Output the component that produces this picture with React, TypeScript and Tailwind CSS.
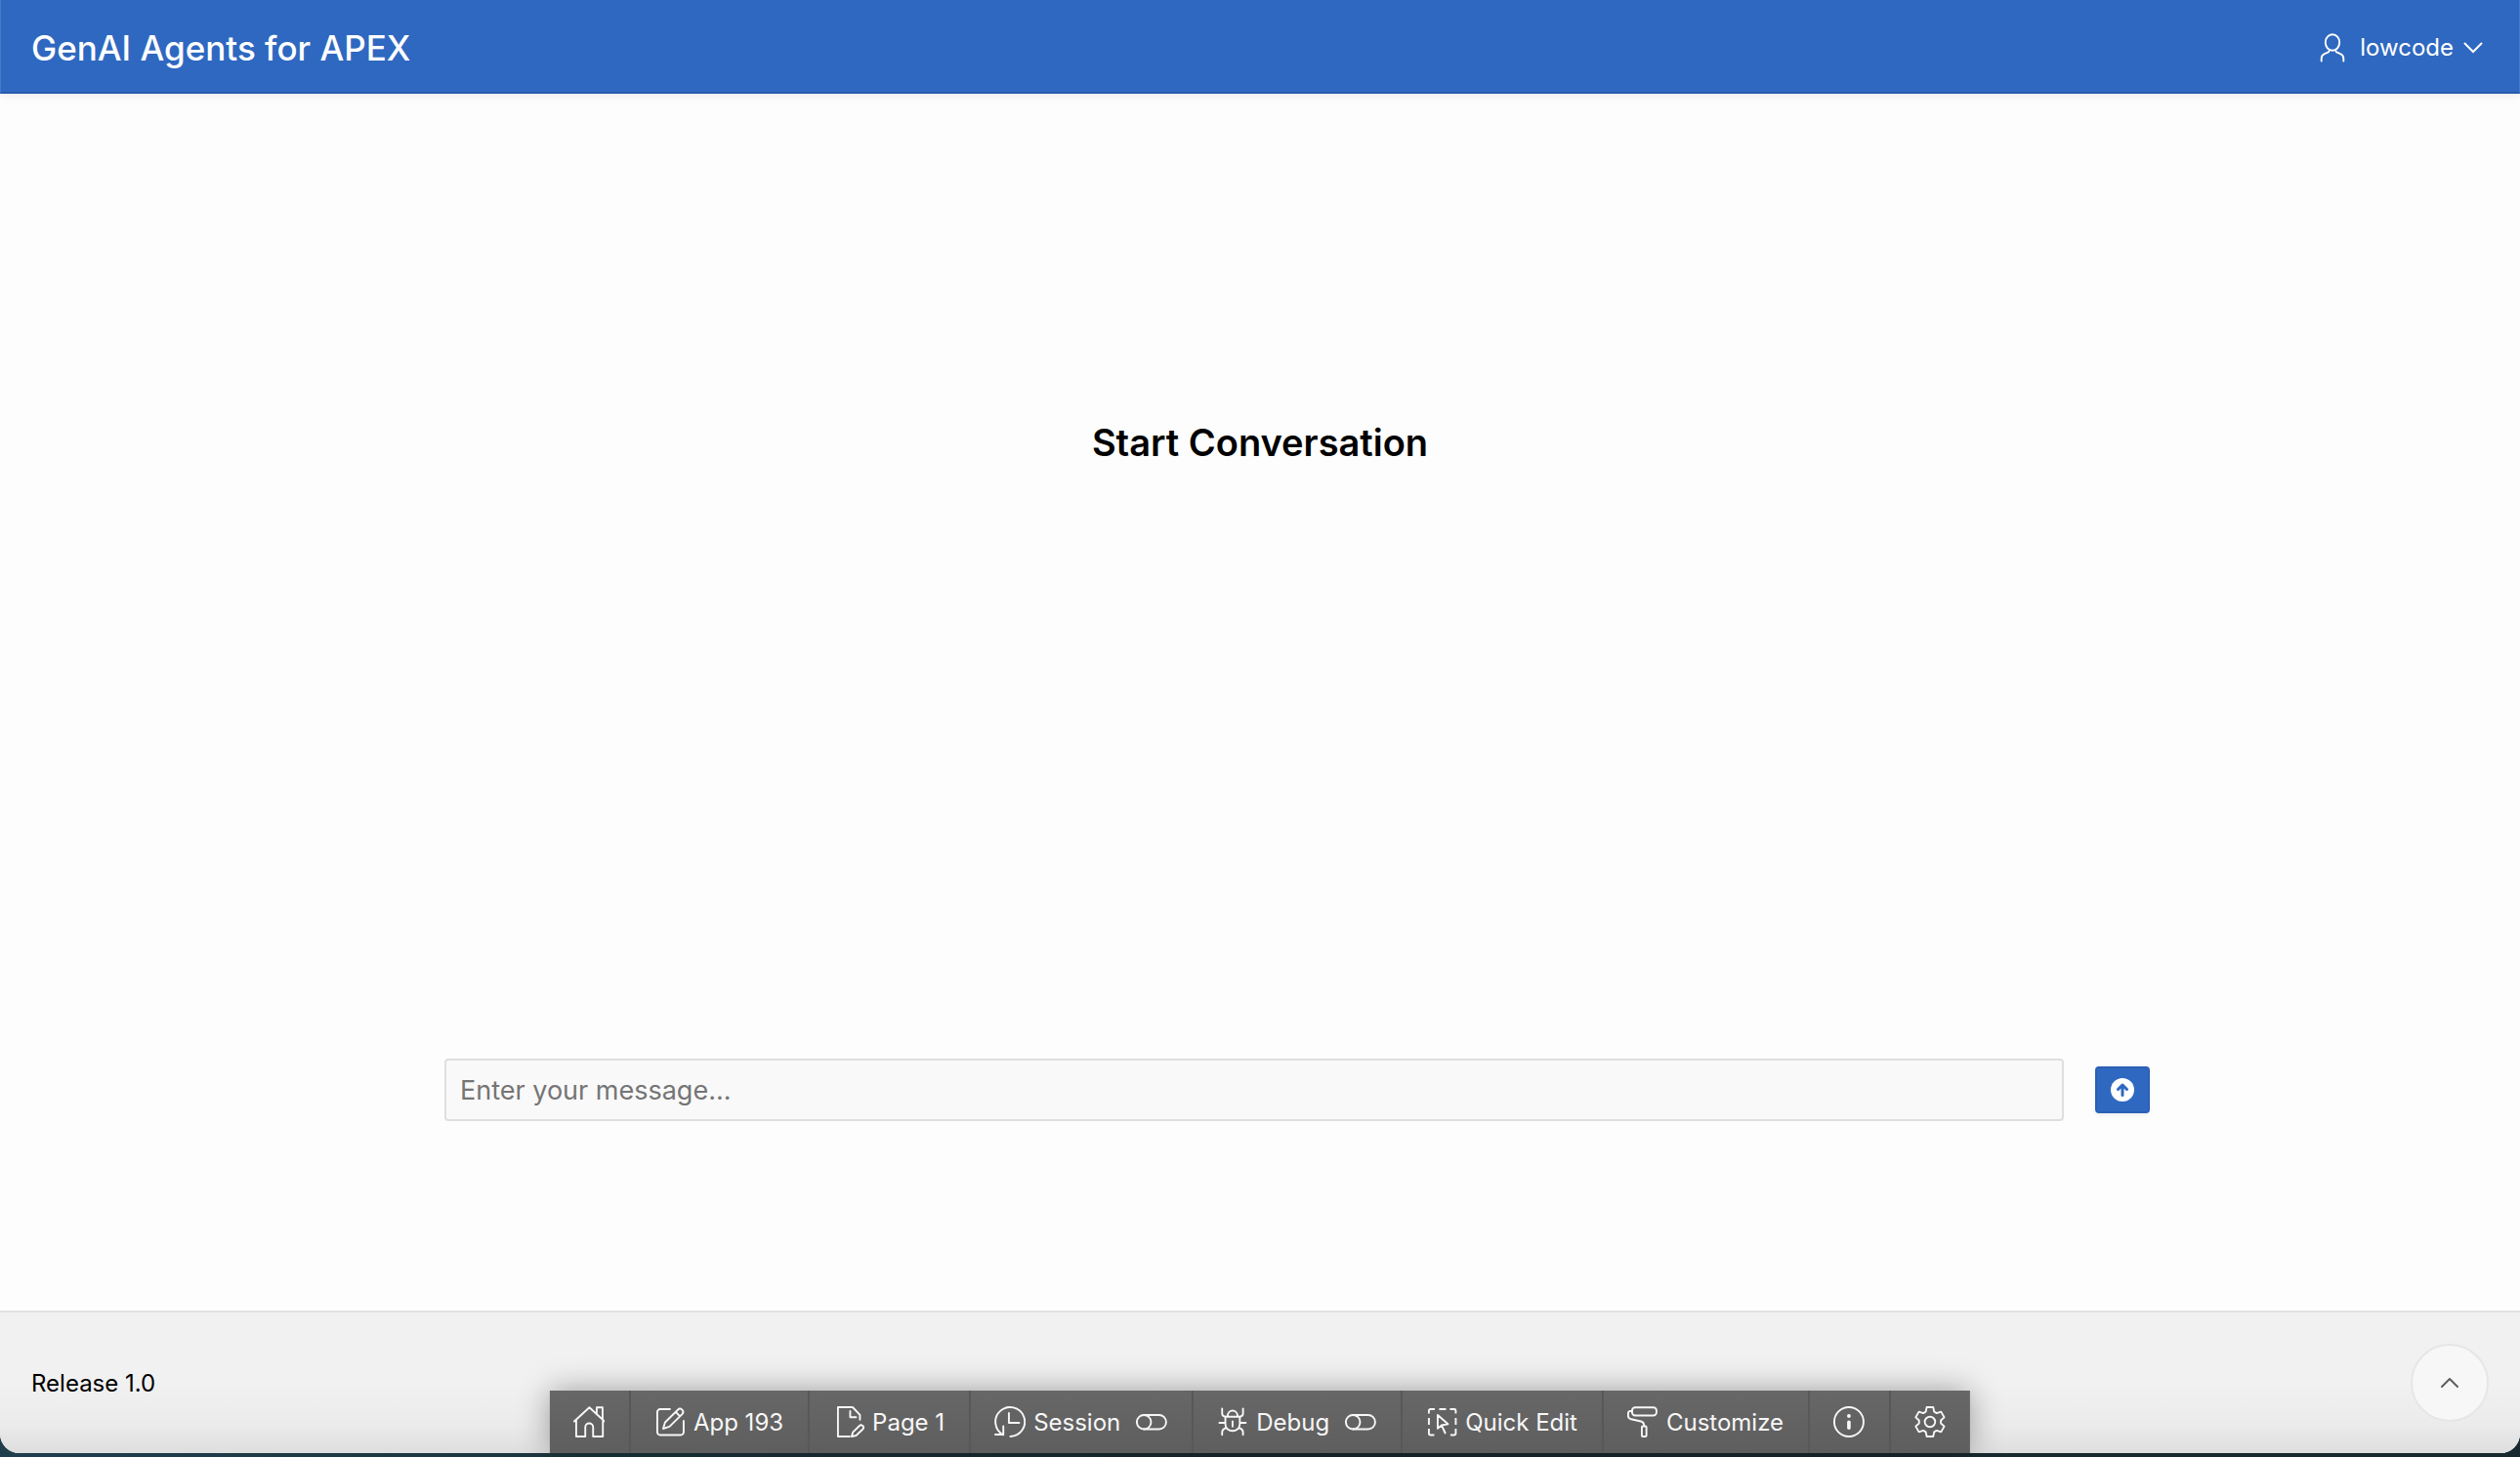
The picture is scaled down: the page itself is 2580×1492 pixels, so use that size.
import type { ReactNode } from "react";

function Icon({ children, className = "" }: { children: ReactNode; className?: string }) {
  return (
    <svg
      viewBox="0 0 32 32"
      className={`size-8 shrink-0 ${className}`}
      fill="none"
      stroke="currentColor"
      strokeWidth="1.9"
      strokeLinecap="round"
      strokeLinejoin="round"
      aria-hidden="true"
    >
      {children}
    </svg>
  );
}

const UserIcon = () => (
  <Icon>
    <ellipse cx="16" cy="10.5" rx="7.2" ry="8.2" />
    <path d="M4.700 29.500v-2.500c0-2.500 1.300-4 3.200-4.800l2.800-1.300c1.500-.6 2-1.500 2.200-2.600M27.300 29.500v-2.500c0-2.500-1.300-4-3.200-4.800l-2.800-1.300c-1.500-.6-2-1.500-2.200-2.600" />
  </Icon>
);

const HomeIcon = () => (
  <Icon>
    <path d="M1 15.500 16.500 1.300 32 15.500M3 14v17h9.300v-9.500a4 4 0 0 1 8 0V31h10V14M24 8V1.200h6v12" />
  </Icon>
);

const EditIcon = () => (
  <Icon>
    <path d="M16 3H6a3 3 0 0 0-3 3v20.500a3 3 0 0 0 3 3h21a3 3 0 0 0 3-3V15" />
    <path d="m9 23 2-6.500L24 3.700a3.100 3.100 0 0 1 4.500 4.400L15.500 20.900ZM22 6l4.300 4.300" />
  </Icon>
);

const PageIcon = () => (
  <Icon>
    <path d="M17 31H5V1h15l7.500 7.800v5M17.500 5v6.200h6" />
    <path d="m19 31 1.300-4.400 6.500-6.400a2.400 2.400 0 0 1 3.600 3.300L23.600 30Z" />
  </Icon>
);

const SessionIcon = () => (
  <Icon>
    <path d="M16.500 31A15 15 0 1 0 9.300 29.300M9.300 20.500V29H1M15 7v10h10.500" />
  </Icon>
);

const ToggleIcon = ({ className }: { className?: string }) => (
  <Icon className={className}>
    <rect x="1" y="9" width="30" height="14.500" rx="7.200" />
    <path d="M8.300 9a7.200 7.200 0 0 1 0 14.500" />
  </Icon>
);

const BugIcon = () => (
  <Icon>
    <path d="M10.800 10.700c0-8.200 10.400-8.200 10.400 0M5.300 2.500v4.800c0 2 1.500 3.400 3.700 3.400h14c2.200 0 3.700-1.400 3.700-3.400V2.500" />
    <path d="M8.600 10.700v7.500c0 9.300 14.800 9.300 14.800 0v-7.500M2.500 17h6M23.500 17h6M5.300 29.300v-2.500c0-2.500 1.700-4 4.500-4.600M26.700 29.300v-2.500c0-2.500-1.700-4-4.500-4.600M16 15.500v5.200" />
  </Icon>
);

const QuickEditIcon = () => (
  <Icon>
    <path d="M3 7.500V4.500A1.500 1.500 0 0 1 4.500 3H9M13.500 3h7M24.500 3H29a1.500 1.500 0 0 1 1.500 1.500v3M3 12v7M30.500 12v7M3 23v5a1.500 1.500 0 0 0 1.500 1.500H8.500M30.500 23v5a1.500 1.500 0 0 1-1.500 1.500h-4" strokeLinecap="butt" />
    <path d="M19.700 27.500 16 19.500 12 22.800V9l10.500 9.300-6.500 1.200" />
  </Icon>
);

const RollerIcon = () => (
  <Icon>
    <rect x="5" y="1.200" width="25" height="8.300" rx="3.200" />
    <path d="M5 5H3a2 2 0 0 0-2 2v3c0 2 1 2.800 3 3.300l10 2.200c2.200.5 3.300 1.500 3.300 4.500" />
    <rect x="15" y="20.500" width="4.700" height="10.500" rx="1" />
  </Icon>
);

const InfoIcon = () => (
  <Icon>
    <circle cx="16" cy="16" r="15" />
    <circle cx="16" cy="10" r="1.900" fill="currentColor" stroke="none" />
    <rect x="14.200" y="14.500" width="3.600" height="9.500" rx="1.800" fill="currentColor" stroke="none" />
  </Icon>
);

// One tooth as [x, y] offsets from the gear's centre; repeated every 60 degrees.
const tooth = [
  [-5.6, -9.6],
  [-4.3, -10.4],
  [-3.3, -15],
  [3.3, -15],
  [4.3, -10.4],
  [5.6, -9.6],
];
const gearPoints = [0, 60, 120, 180, 240, 300]
  .flatMap((deg) => {
    const a = (deg * Math.PI) / 180;
    return tooth.map(
      ([x, y]) =>
        `${(16 + x * Math.cos(a) - y * Math.sin(a)).toFixed(2)},${(16 + x * Math.sin(a) + y * Math.cos(a)).toFixed(2)}`,
    );
  })
  .join(" ");

const GearIcon = () => (
  <Icon>
    <polygon points={gearPoints} />
    <circle cx="16" cy="16" r="5.300" />
  </Icon>
);

const tools: { name: string; icon: ReactNode; label?: string; toggle?: boolean }[] = [
  { name: "Home", icon: <HomeIcon /> },
  { name: "App 193", icon: <EditIcon />, label: "App 193" },
  { name: "Page 1", icon: <PageIcon />, label: "Page 1" },
  { name: "Session", icon: <SessionIcon />, label: "Session", toggle: true },
  { name: "Debug", icon: <BugIcon />, label: "Debug", toggle: true },
  { name: "Quick Edit", icon: <QuickEditIcon />, label: "Quick Edit" },
  { name: "Customize", icon: <RollerIcon />, label: "Customize" },
  { name: "Info", icon: <InfoIcon /> },
  { name: "Settings", icon: <GearIcon /> },
];

function DeveloperToolbar() {
  return (
    <nav
      aria-label="Developer toolbar"
      className="absolute bottom-1 left-1/2 flex h-16 -translate-x-1/2 bg-linear-to-b from-[#676767] to-[#5e5e5e] text-[#f7f7f7] shadow-[0_0_32px_rgba(0,0,0,0.35)]"
    >
      {tools.map((tool) => (
        <button
          key={tool.name}
          type="button"
          aria-label={tool.name}
          className="flex items-center gap-2 border-r-2 border-[#585858] pr-[25px] pl-6 text-[24px] leading-8 whitespace-nowrap last:border-r-0"
        >
          {tool.icon}
          {tool.label && <span className="pt-0.5">{tool.label}</span>}
          {tool.toggle && <ToggleIcon className="ml-2" />}
        </button>
      ))}
    </nav>
  );
}

export default function App() {
  return (
    <div className="relative flex min-h-screen flex-col overflow-hidden bg-linear-to-r from-[#1f3f4c] via-[#182a30] to-[#182a30] pb-1 font-['Inter',sans-serif] text-black">
      <div className="flex flex-1 flex-col overflow-hidden rounded-b-[20px] bg-[#fdfdfd]">
        <header className="relative flex h-24 items-center justify-between border-x border-b-2 border-x-[#4478c8] border-b-[#295bab] bg-[#2f68c0] pt-1 pr-[37px] pl-[31px] text-white shadow-[0_2px_8px_rgba(0,0,0,0.08)]">
          <h1 className="text-[35px] leading-12 font-medium">GenAI Agents for APEX</h1>
          <button type="button" className="flex items-center text-[24px] leading-8">
            <UserIcon />
            <span className="ml-3">lowcode</span>
            <svg viewBox="0 0 20 12" className="ml-2.5 h-3 w-5" fill="none" stroke="currentColor" strokeWidth="2" strokeLinecap="round" aria-hidden="true">
              <path d="m1.500 1.500 8.500 8.500 8.500-8.500" />
            </svg>
          </button>
        </header>

        <main className="flex flex-1 flex-col justify-between pt-[333px] pb-[194px]">
          <h2 className="text-center text-[38px] leading-12 font-semibold">Start Conversation</h2>
          <form className="flex items-center gap-8 pr-[379px] pl-[455px]" onSubmit={(e) => e.preventDefault()}>
            <input
              type="text"
              aria-label="Message"
              placeholder="Enter your message..."
              className="h-16 min-w-0 flex-1 rounded-sm border-2 border-[#dfdfdf] bg-[#f9f9f9] px-3.5 text-[27px] outline-none placeholder:text-[#757575]"
            />
            <button
              type="submit"
              aria-label="Send"
              className="flex h-12 w-14 items-center justify-center rounded-sm border-2 border-[#2b60b4] bg-[#2f68c0] text-white shadow-[0_2px_4px_rgba(0,0,0,0.06)]"
            >
              <svg viewBox="0 0 24 24" className="size-6" aria-hidden="true">
                <circle cx="12" cy="12" r="12" fill="currentColor" />
                <path d="M12 17.500V7.500M7.500 11.500 12 7l4.500 4.500" fill="none" stroke="#2f68c0" strokeWidth="3" strokeLinecap="round" strokeLinejoin="round" />
              </svg>
            </button>
          </form>
        </main>

        <footer className="flex items-center justify-between border-t-2 border-[#e3e3e3] bg-linear-to-b from-[#f1f1f1] from-50% via-[#ebebeb] via-80% to-[#dedede] p-8">
          <span className="pt-0.5 text-[24px] leading-8">Release 1.0</span>
          <button
            type="button"
            aria-label="Back to top"
            className="flex size-20 items-center justify-center rounded-full border-2 border-[#e6e6e6] bg-[#f7f7f7] text-[#5c5f62]"
          >
            <svg viewBox="0 0 20 12" className="h-3 w-5" fill="none" stroke="currentColor" strokeWidth="2" strokeLinecap="round" strokeLinejoin="round" aria-hidden="true">
              <path d="m2 10 8-8 8 8" />
            </svg>
          </button>
        </footer>
      </div>
      <DeveloperToolbar />
    </div>
  );
}
